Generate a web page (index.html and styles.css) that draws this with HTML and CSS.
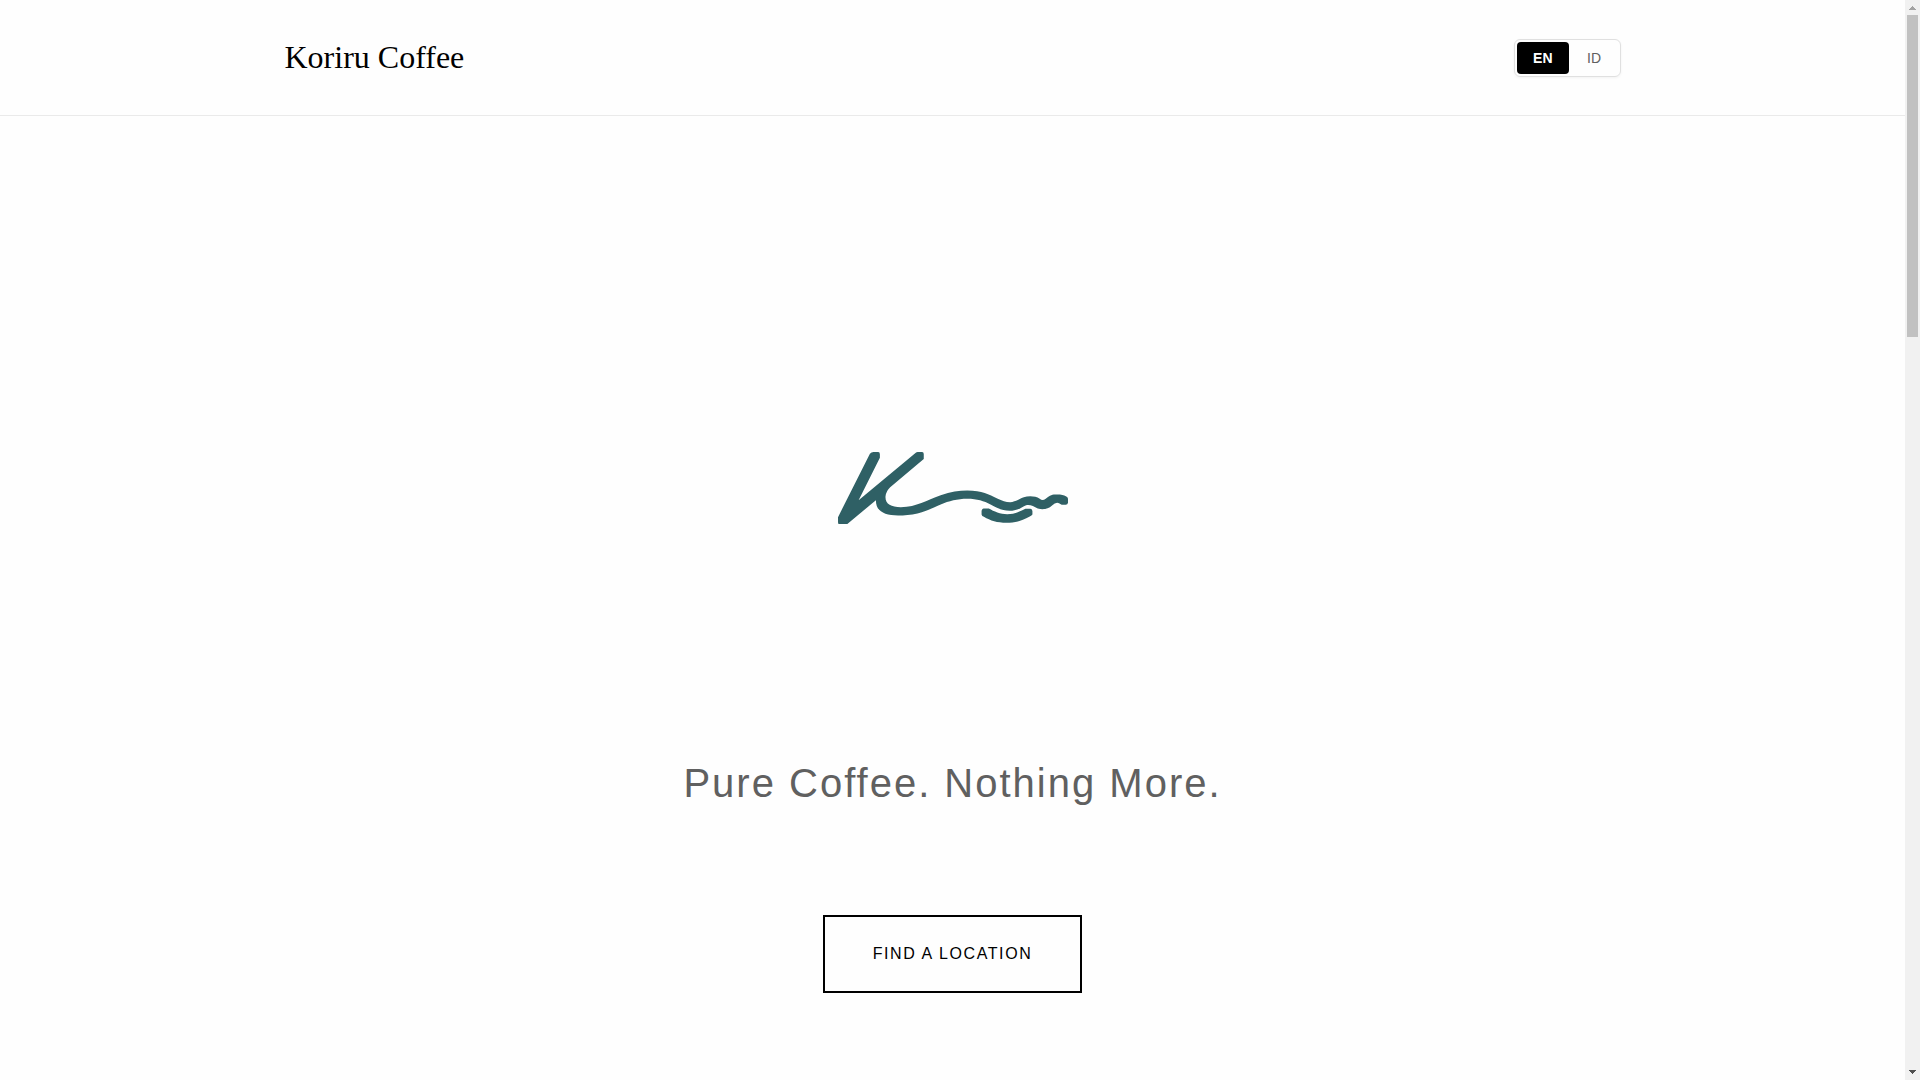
FILE: index.html
```html
<!DOCTYPE html>
<html lang="en">
<head>
<meta charset="utf-8">
<meta name="viewport" content="width=device-width, initial-scale=1">
<title>Koriru Coffee</title>
<link rel="stylesheet" href="styles.css">
</head>
<body>
<div class="page">
  <header class="header">
    <div class="header-inner">
      <a class="brand" href="#home">Koriru Coffee</a>
      <div class="lang" role="group" aria-label="Language">
        <button class="lang-btn active" type="button">EN</button>
        <button class="lang-btn" type="button">ID</button>
      </div>
    </div>
  </header>
  <main class="hero" id="home">
    <div class="logo">
      <svg class="logo-mark" viewBox="51 33 692 219" role="img" aria-label="Koriru">
        <path d="M51 229L147 38Q151 33 158 33H172Q177 33 177 40V50L113 178L285 35Q287 33 291 33H304Q309 33 309 39V54L208 139Q196 150 194 166C192 190 210 199 240 199C290 198 315 178 360 163C390 153 415 149 440 149C485 149 505 161 530 173C545 180 556 184 569 184C585 184 595 174 610 169C625 165 645 165 658 174C664 179 669 179 676 174C690 162 695 161 710 161C723 161 730 162 738 167Q743 169 743 174V186Q742 192 736 192H724L716 187Q706 183 695 194C683 205 668 207 652 203C640 196 628 190 617 193C605 197 595 210 568 210C545 210 530 201 510 191C490 181 470 174 440 174C410 174 385 181 360 191C330 205 310 213 290 218C270 223 250 224 232 224C190 223 165 212 165 178L80 249Q76 252 72 252H58Q51 252 51 244Z"/>
        <path d="M483 210Q484 204 489 203H505C520 212 540 220 560 220C582 220 595 214 615 204H630Q636 205 636 211V221Q634 224 628 227C605 240 585 246 558 246C530 246 510 240 490 228Q484 226 483 221Z"/>
      </svg>
    </div>
    <p class="tagline">Pure Coffee. Nothing More.</p>
    <a class="cta" href="#locations">Find a Location</a>
  </main>
</div>
<div class="scrollbar" aria-hidden="true">
  <svg class="arrow" viewBox="0 0 15 15"><path fill="#a3a3a3" d="M7 6h1v1h1v1h1v1h1v1H4V9h1V8h1V7h1z"/></svg>
  <div class="track"><div class="thumb"></div></div>
  <svg class="arrow" viewBox="0 0 15 15"><path fill="#505050" d="M4 5h7v1h-1v1H9v1H8v1H7V8H6V7H5V6H4z"/></svg>
</div>
</body>
</html>
```
FILE: styles.css
```css
* {
  box-sizing: border-box;
}

body {
  margin: 0;
  display: flex;
  height: 100vh;
  overflow: hidden;
  background: #fefefe;
  color: #000;
  font-family: "Liberation Sans", Arial, sans-serif;
  font-size: 16px;
  line-height: 26px;
}

.page {
  flex: 1;
  overflow: hidden;
}

.header {
  border-bottom: 1px solid #eaeaea;
}

.header-inner {
  display: flex;
  align-items: center;
  justify-content: space-between;
  max-width: 1400px;
  margin: 0 auto;
  padding: 32px;
}

.brand {
  color: #000;
  font-family: "Liberation Serif", "Times New Roman", serif;
  font-size: 32px;
  line-height: 51px;
  text-decoration: none;
}

.lang {
  display: flex;
  gap: 2px;
  padding: 2px;
  border: 1px solid #e0e0e0;
  border-radius: 6px;
  box-shadow: 0 1px 3px rgba(0, 0, 0, 0.05);
}

.lang-btn {
  padding: 8px 16px;
  border: 0;
  border-radius: 4px;
  background: transparent;
  color: #606060;
  font-family: inherit;
  font-size: 14px;
  line-height: 16px;
  letter-spacing: 0.02em;
}

.lang-btn.active {
  background: #000;
  color: #fff;
  font-weight: 700;
}

.hero {
  display: flex;
  flex-direction: column;
  align-items: center;
  justify-content: center;
  min-height: 100vh;
}

.logo {
  display: flex;
  align-items: center;
  height: 338px;
}

.logo-mark {
  display: block;
  width: 230px;
  fill: #2f6065;
}

.tagline {
  margin: 94px 0 100px;
  color: #606060;
  font-size: 40px;
  line-height: 64px;
  letter-spacing: 2px;
}

.cta {
  padding: 24px 48px;
  border: 2px solid #000;
  color: #000;
  letter-spacing: 0.1em;
  text-decoration: none;
  text-transform: uppercase;
}

.scrollbar {
  display: flex;
  flex-direction: column;
  width: 15px;
  background: #f1f1f1;
}

.arrow {
  display: block;
  height: 15px;
}

.track {
  flex: 1;
  padding: 0 2px;
}

.thumb {
  height: 30.7%;
  background: #c1c1c1;
}
```
